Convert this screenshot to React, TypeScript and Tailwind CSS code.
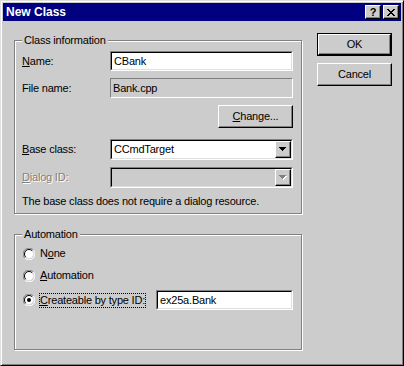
import React from 'react';

type Props = { className?: string; children?: React.ReactNode };

// raised 3d face, used for push buttons and the little combo / caption buttons
const Raised = ({ className = '', children }: Props) => (
  <div
    className={`flex items-center justify-center border border-t-white border-l-white border-r-black border-b-black bg-[#cccccc] shadow-[inset_-1px_-1px_0_#808080] ${className}`}
  >
    {children}
  </div>
);

// sunken 3d field (edit box / combo)
const Field = ({ className = '', inner = '', children }: Props & { inner?: string }) => (
  <div
    className={`border border-t-[#808080] border-l-[#808080] border-r-white border-b-white ${className}`}
  >
    <div
      className={`flex h-full items-center border border-t-black border-l-black border-r-[#dfdfdf] border-b-[#dfdfdf] ${inner}`}
    >
      {children}
    </div>
  </div>
);

const Group = ({ label, className = '', children }: Props & { label: string }) => (
  <div
    className={`relative border border-[#808080] shadow-[1px_1px_0_#fff,inset_1px_1px_0_#fff] ${className}`}
  >
    <span className="absolute left-[7px] top-[-7px] bg-[#cccccc] px-[2px] leading-[13px]">
      {label}
    </span>
    {children}
  </div>
);

const Arrow = ({ disabled = false }: { disabled?: boolean }) => (
  <svg width="8" height="5" viewBox="0 0 8 5" shapeRendering="crispEdges">
    {disabled && (
      <path d="M1 1h7v1H1zM2 2h5v1H2zM3 3h3v1H3zM4 4h1v1H4z" fill="#ffffff" />
    )}
    <path
      d="M0 0h7v1H0zM1 1h5v1H1zM2 2h3v1H2zM3 3h1v1H3z"
      fill={disabled ? '#808080' : '#000000'}
    />
  </svg>
);

const Combo = ({ value, disabled = false }: { value: string; disabled?: boolean }) => (
  <Field
    className="h-[21px] w-[183px]"
    inner={disabled ? 'bg-[#cccccc]' : 'bg-white'}
  >
    <span className="flex-1 pl-[2px]">{value}</span>
    <Raised className="h-full w-[16px]">
      <Arrow disabled={disabled} />
    </Raised>
  </Field>
);

const Radio = ({ checked = false }: { checked?: boolean }) => (
  <svg width="12" height="12" viewBox="0 0 12 12" className="shrink-0">
    <circle cx="6" cy="6" r="4.5" fill="#ffffff" />
    <path d="M1.8 10.2 A5.5 5.5 0 0 1 10.2 1.8" stroke="#808080" fill="none" />
    <path d="M10.2 1.8 A5.5 5.5 0 0 1 1.8 10.2" stroke="#ffffff" fill="none" />
    <path d="M2.8 9.2 A4.5 4.5 0 0 1 9.2 2.8" stroke="#000000" fill="none" />
    <path d="M9.2 2.8 A4.5 4.5 0 0 1 2.8 9.2" stroke="#dfdfdf" fill="none" />
    {checked && <circle cx="6" cy="6" r="2" fill="#000000" />}
  </svg>
);

const RadioRow = ({ checked = false, focused = false, children }: Props & { checked?: boolean; focused?: boolean }) => (
  <div className="flex items-center">
    <Radio checked={checked} />
    <span
      className={`ml-[4px] border leading-[13px] ${focused ? 'border-dotted border-black' : 'border-transparent'}`}
    >
      {children}
    </span>
  </div>
);

export default function App() {
  return (
    <div className="flex h-[366px] w-[404px] flex-col border border-t-[#dfdfdf] border-l-[#dfdfdf] border-r-black border-b-black bg-[#cccccc] p-[2px] font-['Liberation_Sans',Arial,sans-serif] text-[11px] leading-[13px] tracking-[-0.2px] text-black shadow-[inset_1px_1px_0_#fff,inset_-1px_-1px_0_#808080]">
      {/* caption */}
      <div className="flex h-[18px] items-center bg-[#000080] pl-[3px] pr-[2px]">
        <span className="flex-1 text-[12px] font-bold tracking-normal text-white">New Class</span>
        <Raised className="h-[14px] w-[16px]">
          <span className="text-[11px] font-bold leading-none">?</span>
        </Raised>
        <Raised className="ml-[2px] h-[14px] w-[16px]">
          <svg width="8" height="7" viewBox="0 0 8 7" shapeRendering="crispEdges">
            <path
              d="M0 0h2v1H0zM6 0h2v1H6zM1 1h2v1H1zM5 1h2v1H5zM2 2h4v1H2zM3 3h2v1H3zM2 4h4v1H2zM1 5h2v1H1zM5 5h2v1H5zM0 6h2v1H0zM6 6h2v1H6z"
              fill="#000"
            />
          </svg>
        </Raised>
      </div>

      <div className="flex pl-[11px] pt-[12px]">
        <div className="mt-[7px] flex w-[288px] flex-col">
          <Group label="Class information" className="h-[174px]">
            <div className="flex flex-col pl-[7px] pt-[10px]">
              <div className="flex h-[20px] items-center">
                <span className="w-[88px]">
                  <u>N</u>ame:
                </span>
                <Field className="h-[20px] w-[183px]" inner="bg-white">
                  <span className="pl-[2px]">CBank</span>
                </Field>
              </div>
              <div className="mt-[7px] flex h-[20px] items-center">
                <span className="w-[88px]">File name:</span>
                <div className="flex h-[20px] w-[183px] items-center border border-t-[#808080] border-l-[#808080] border-r-white border-b-white pl-[2px]">
                  Bank.cpp
                </div>
              </div>
              <div className="mt-[7px] flex">
                <Raised className="ml-[196px] h-[23px] w-[75px]">
                  <span>
                    <u>C</u>hange...
                  </span>
                </Raised>
              </div>
              <div className="mt-[11px] flex h-[21px] items-center">
                <span className="w-[88px]">
                  <u>B</u>ase class:
                </span>
                <Combo value="CCmdTarget" />
              </div>
              <div className="mt-[7px] flex h-[21px] items-center">
                <span className="w-[88px] text-[#808080] [text-shadow:1px_1px_0_#fff]">
                  <u>D</u>ialog ID:
                </span>
                <Combo value="" disabled />
              </div>
              <div className="mt-[7px]">The base class does not require a dialog resource.</div>
            </div>
          </Group>

          <Group label="Automation" className="mt-[20px] h-[116px]">
            <div className="flex flex-col pl-[8px] pt-[11px]">
              <RadioRow>
                N<u>o</u>ne
              </RadioRow>
              <div className="mt-[7px]">
                <RadioRow>
                  <u>A</u>utomation
                </RadioRow>
              </div>
              <div className="mt-[7px] flex h-[20px] items-center">
                <RadioRow checked focused>
                  <u>C</u>reateable by type ID:
                </RadioRow>
                <Field className="ml-[10px] h-[20px] w-[137px]" inner="bg-white">
                  <span className="pl-[2px]">ex25a.Bank</span>
                </Field>
              </div>
            </div>
          </Group>
        </div>

        <div className="ml-[15px] flex flex-col">
          <div className="border border-black">
            <Raised className="h-[21px] w-[73px]">OK</Raised>
          </div>
          <Raised className="mt-[7px] h-[23px] w-[75px]">Cancel</Raised>
        </div>
      </div>
    </div>
  );
}
